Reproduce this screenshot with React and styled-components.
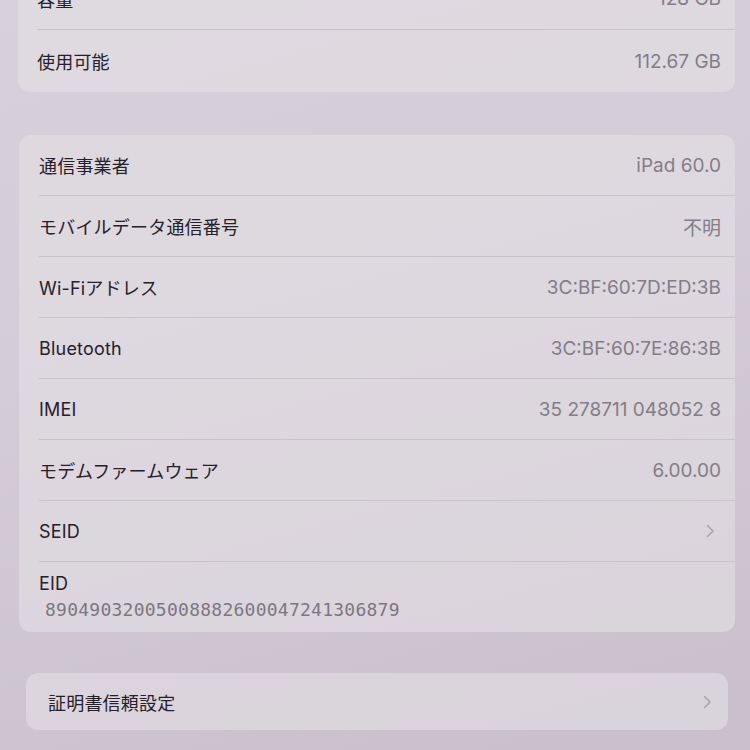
import styled, { createGlobalStyle } from 'styled-components'

const Global = createGlobalStyle`
  html, body {
    margin: 0;
    padding: 0;
    height: 100%;
  }
  body {
    overflow: hidden;
    background: linear-gradient(165deg, #d8d0da 0%, #d3cbd6 45%, #c8bfcb 100%);
    font-family: Inter, "Noto Sans CJK JP", sans-serif;
    -webkit-font-smoothing: antialiased;
  }
`

const Page = styled.main`
  display: flex;
  flex-direction: column;
  margin-top: -32px;
  width: 750px;
  height: 782px;
`

const Card = styled.section`
  display: flex;
  flex-direction: column;
  margin: ${p => p.$top}px ${p => p.$right}px 0 ${p => p.$left}px;
  padding-left: ${p => p.$pad}px;
  background: rgba(229, 223, 229, 0.6);
  border-radius: 12px;
`

const Row = styled.div`
  display: flex;
  align-items: center;
  justify-content: space-between;
  height: ${p => p.$h || 60}px;
  padding-right: ${p => p.$padR || 14}px;
  border-bottom: ${p => (p.$last ? 'none' : '1px solid #c8c2ca')};
`

const Label = styled.span`
  font-family: Inter, "Noto Sans CJK JP", sans-serif;
  font-size: 18px;
  color: #25212a;
  letter-spacing: 0.2px;
`

const Value = styled.span`
  font-family: Inter, "Noto Sans CJK JP", sans-serif;
  font-size: 19px;
  color: #827d88;
`

const Stack = styled.div`
  display: flex;
  flex-direction: column;
  justify-content: center;
  gap: 5px;
  height: 70px;
  padding-bottom: 2px;
  box-sizing: border-box;
`

const Mono = styled.span`
  font-family: "DejaVu Sans Mono", monospace;
  font-size: 18px;
  letter-spacing: 0.25px;
  color: #7b7781;
  padding-left: 6px;
`

const Chevron = () => (
  <svg width="10" height="16" viewBox="0 0 10 16" fill="none">
    <path d="M2.5 2.5l5.5 5.5-5.5 5.5" stroke="#a9a3ac" strokeWidth="1.5" strokeLinecap="round" strokeLinejoin="round" />
  </svg>
)

const storage = [
  ['容量', '128 GB'],
  ['使用可能', '112.67 GB'],
]

const network = [
  ['通信事業者', 'iPad 60.0'],
  ['モバイルデータ通信番号', '不明'],
  ['Wi-Fiアドレス', '3C:BF:60:7D:ED:3B'],
  ['Bluetooth', '3C:BF:60:7E:86:3B'],
  ['IMEI', '35 278711 048052 8'],
  ['モデムファームウェア', '6.00.00'],
]

export default function App() {
  return (
    <>
      <Global />
      <Page>
        <Card $top={0} $left={18} $right={15} $pad={19}>
          {storage.map(([k, v], i) => (
            <Row key={k} $h={i === 0 ? 61 : 62} $last={i === storage.length - 1}>
              <Label>{k}</Label>
              <Value>{v}</Value>
            </Row>
          ))}
        </Card>

        <Card $top={43} $left={19} $right={15} $pad={20}>
          {network.map(([k, v]) => (
            <Row key={k}>
              <Label>{k}</Label>
              <Value>{v}</Value>
            </Row>
          ))}
          <Row $padR={20}>
            <Label>SEID</Label>
            <Chevron />
          </Row>
          <Stack>
            <Label>EID</Label>
            <Mono>89049032005008882600047241306879</Mono>
          </Stack>
        </Card>

        <Card $top={41} $left={26} $right={22} $pad={22}>
          <Row $h={57} $padR={16} $last>
            <Label>証明書信頼設定</Label>
            <Chevron />
          </Row>
        </Card>
      </Page>
    </>
  )
}
